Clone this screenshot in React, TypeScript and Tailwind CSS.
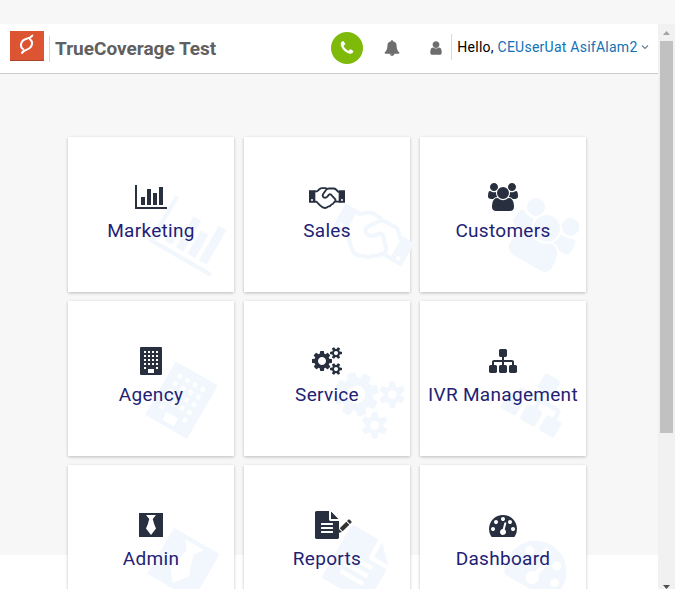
import type { ReactNode } from "react";

type Glyph = { width: number; art: ReactNode };

const dot = (x: number, y: number) => `M${x} ${y}h128v128h-128z`;
const windows = [256, 512, 768, 1024]
  .flatMap((y) => [256, 512, 768, 1024].map((x) => dot(x, y)))
  .concat([dot(256, 1280), dot(1024, 1280)])
  .join("");

const GLYPHS: Record<string, Glyph> = {
  chart: {
    width: 2048,
    art: <path d="M640 896v512h-256v-512h256zM1024 384v1024h-256v-1024h256zM2048 1536v128h-2048v-1536h128v1408h1920zM1408 640v768h-256v-768h256zM1792 256v1152h-256v-1152h256z" />,
  },
  handshake: {
    width: 2304,
    art: (
      <g transform="scale(21.333)">
        <path fillRule="evenodd" d="M0 22h19v37h-19zM6 51a3 3 0 1 0 6 0a3 3 0 1 0 -6 0zM89 22h19v37h-19zM96 51a3 3 0 1 0 6 0a3 3 0 1 0 -6 0z" />
        <path fill="none" stroke="currentColor" strokeWidth="5.500" strokeLinejoin="round" strokeLinecap="round" d="M18 25h6l8-7q3-2.500 7-2.500h12M18 56h4l12 12q7 7 14 7q5 0 9-4q7 0 10-6q6-1 8-7q6-2 4-9l-13-14q-3-3-6 0l-5 6q-5 5-11 2q-5-4-2-9l9-13q3-4.500 9-4.500h14q4 0 7 3l7 7h4M79 56h11" />
      </g>
    ),
  },
  users: {
    width: 1920,
    art: <path d="M593 896q-162 5-265 128h-134q-82 0-138-40.5t-56-118.5q0-353 124-353 6 0 43.5 21t97.5 42.5 119 21.5q67 0 133-23-5 37-5 66 0 139 81 256zm1071 637q0 120-73 189.5t-194 69.5h-874q-121 0-194-69.5t-73-189.5q0-53 3.5-103.5t14-109 26.5-108.5 43-97.5 62-81 85.5-53.5 111.5-20q10 0 43 21.5t73 48 107 48 135 21.5 135-21.5 107-48 73-48 43-21.5q61 0 111.5 20t85.5 53.5 62 81 43 97.5 26.5 108.5 14 109 3.5 103.5zm-1024-1277q0 106-75 181t-181 75-181-75-75-181 75-181 181-75 181 75 75 181zm704 384q0 159-112.5 271.5t-271.5 112.5-271.5-112.5-112.5-271.5 112.5-271.5 271.5-112.5 271.5 112.5 112.5 271.5zm576 225q0 78-56 118.5t-138 40.5h-134q-103-123-265-128 81-117 81-256 0-29-5-66 66 23 133 23 59 0 119-21.5t97.5-42.5 43.5-21q124 0 124 353zm-128-609q0 106-75 181t-181 75-181-75-75-181 75-181 181-75 181 75 75 181z" />,
  },
  building: {
    width: 1408,
    art: <path fillRule="evenodd" d={"M64 0h1280q64 0 64 64v1664q0 64-64 64h-1280q-64 0-64-64v-1664q0-64 64-64zM544 1408h320q32 0 32 32v192q0 32-32 32h-320q-32 0-32-32v-192q0-32 32-32z" + windows} />,
  },
  cogs: {
    width: 1920,
    art: <path d="M896 896q0-106-75-181t-181-75-181 75-75 181 75 181 181 75 181-75 75-181zm768 512q0-52-38-90t-90-38-90 38-38 90q0 53 37.500 90.500t90.500 37.500 90.500-37.500 37.500-90.500zm0-1024q0-52-38-90t-90-38-90 38-38 90q0 53 37.500 90.500t90.500 37.500 90.500-37.500 37.500-90.500zm-384 421v185q0 10-7 19.500t-16 10.500l-155 24q-11 35-32 76 34 48 90 115 7 11 7 20 0 12-7 19-23 30-82.500 89.500t-78.500 59.500q-11 0-21-7l-115-90q-37 19-77 31-11 108-23 155-7 24-30 24h-186q-11 0-20-7.500t-10-17.500l-23-153q-34-10-75-31l-118 89q-7 7-20 7-11 0-21-8-144-133-144-160 0-9 7-19 10-14 41-53t47-61q-23-44-35-82l-152-24q-10-1-17-9.500t-7-19.500v-185q0-10 7-19.500t16-10.500l155-24q11-35 32-76-34-48-90-115-7-11-7-20 0-12 7-20 22-30 82-89t79-59q11 0 21 7l115 90q34-18 77-32 11-108 23-154 7-24 30-24h186q11 0 20 7.500t10 17.500l23 153q34 10 75 31l118-89q8-7 20-7 11 0 21 8 144 133 144 160 0 8-7 19-12 16-42 54t-45 60q23 48 34 82l152 23q10 2 17 10.500t7 19.500zm640 533v140q0 16-149 31-12 27-30 52 51 113 51 138 0 4-4 7-122 71-124 71-8 0-46-47t-52-68q-20 2-30 2t-30-2q-14 21-52 68t-46 47q-2 0-124-71-4-3-4-7 0-25 51-138-18-25-30-52-149-15-149-31v-140q0-16 149-31 13-29 30-52-51-113-51-138 0-4 4-7 4-2 35-20t59-34 30-16q8 0 46 46.500t52 67.500q20-2 30-2t30 2q51-71 92-112l6-2q4 0 124 70 4 3 4 7 0 25-51 138 17 23 30 52 149 15 149 31zm0-1024v140q0 16-149 31-12 27-30 52 51 113 51 138 0 4-4 7-122 71-124 71-8 0-46-47t-52-68q-20 2-30 2t-30-2q-14 21-52 68t-46 47q-2 0-124-71-4-3-4-7 0-25 51-138-18-25-30-52-149-15-149-31v-140q0-16 149-31 13-29 30-52-51-113-51-138 0-4 4-7 4-2 35-20t59-34 30-16q8 0 46 46.500t52 67.500q20-2 30-2t30 2q51-71 92-112l6-2q4 0 124 70 4 3 4 7 0 25-51 138 17 23 30 52 149 15 149 31z" />,
  },
  sitemap: {
    width: 1792,
    art: <path d="M1792 1248v320q0 40-28 68t-68 28h-320q-40 0-68-28t-28-68v-320q0-40 28-68t68-28h96v-192h-512v192h96q40 0 68 28t28 68v320q0 40-28 68t-68 28h-320q-40 0-68-28t-28-68v-320q0-40 28-68t68-28h96v-192h-512v192h96q40 0 68 28t28 68v320q0 40-28 68t-68 28h-320q-40 0-68-28t-28-68v-320q0-40 28-68t68-28h96v-192q0-52 38-90t90-38h512v-192h-96q-40 0-68-28t-28-68v-320q0-40 28-68t68-28h320q40 0 68 28t28 68v320q0 40-28 68t-68 28h-96v192h512q52 0 90 38t38 90v192h96q40 0 68 28t28 68z" />,
  },
  tie: {
    width: 1536,
    art: <path fillRule="evenodd" d="M0 128h1536v1536h-1536zM448 256h640l-208 256q70 330 208 610l-320 410l-320-410q138-280 208-610z" />,
  },
  file: {
    width: 1536,
    art: <path fillRule="evenodd" d="M1468 476q14 14 28 36h-472v-472q22 14 36 28zM992 640h544v1056q0 40-28 68t-68 28h-1344q-40 0-68-28t-28-68v-1600q0-40 28-68t68-28h800v544q0 40 28 68t68 28zM416 768h704q32 0 32 32v64q0 32-32 32h-704q-32 0-32-32v-64q0-32 32-32zM416 1024h704q32 0 32 32v64q0 32-32 32h-704q-32 0-32-32v-64q0-32 32-32zM416 1280h704q32 0 32 32v64q0 32-32 32h-704q-32 0-32-32v-64q0-32 32-32z" />,
  },
  gauge: {
    width: 1792,
    art: <path d="M384 1152q0-53-37.500-90.500t-90.500-37.500-90.500 37.500-37.500 90.500 37.500 90.500 90.500 37.500 90.500-37.500 37.500-90.500zm192-448q0-53-37.500-90.500t-90.500-37.500-90.500 37.500-37.500 90.500 37.500 90.500 90.500 37.500 90.500-37.500 37.500-90.500zm428 481l101-382q6-26-7.500-48.500t-38.500-29.500-48 6.500-30 39.500l-101 382q-60 5-107 43.500t-63 98.500q-20 77 20 146t117 89 146-20 89-117q16-60-6-117t-72-91zm660-33q0-53-37.500-90.500t-90.500-37.500-90.500 37.500-37.500 90.500 37.500 90.500 90.500 37.500 90.500-37.500 37.500-90.500zm-640-640q0-53-37.500-90.500t-90.500-37.500-90.500 37.500-37.500 90.500 37.500 90.500 90.500 37.500 90.500-37.500 37.500-90.500zm448 192q0-53-37.500-90.500t-90.500-37.500-90.500 37.500-37.500 90.500 37.500 90.500 90.500 37.500 90.500-37.500 37.500-90.500zm320 448q0 261-141 483-19 29-54 29h-1402q-35 0-54-29-141-221-141-483 0-182 71-348t191-286 286-191 348-71 348 71 286 191 191 286 71 348z" />,
  },
  bell: {
    width: 1792,
    art: <path d="M912 1696q0-16-16-16-59 0-101.500-42.500t-42.500-101.500q0-16-16-16t-16 16q0 73 51.500 124.500t124.500 51.500q16 0 16-16zm816-288q0 52-38 90t-90 38h-448q0 106-75 181t-181 75-181-75-75-181h-448q-52 0-90-38t-38-90q50-42 91-88t85-119.500 74.500-158.500 50-206 19.500-260q0-152 117-282.500t307-158.500q-8-19-8-39 0-40 28-68t68-28 68 28 28 68q0 20-8 39 190 28 307 158.500t117 282.500q0 139 19.500 260t50 206 74.500 158.500 85 119.500 91 88z" />,
  },
  user: {
    width: 1792,
    art: <path d="M1536 1399q0 109-62.500 187t-150.500 78h-854q-88 0-150.500-78t-62.500-187q0-85 8.500-160.500t31.500-152 58.500-131 94-89 134.500-34.500q131 128 313 128t313-128q76 0 134.500 34.500t94 89 58.500 131 31.500 152 8.500 160.500zm-256-887q0 159-112.500 271.500t-271.500 112.500-271.500-112.500-112.500-271.500 112.500-271.500 271.500-112.500 271.500 112.500 112.500 271.500z" />,
  },
  phone: {
    width: 1792,
    art: <path d="M1600 1240q0 27-10 70.500t-21 68.500q-21 50-122 106-94 51-186 51-27 0-53-3.500t-57.500-12.500-47-14.500-55.500-20.500-49-18q-98-35-175-83-127-79-264-216t-216-264q-48-77-83-175-3-9-18-49t-20.500-55.500-14.500-47-12.500-57.500-3.500-53q0-92 51-186 56-101 106-122 25-11 68.500-21t70.500-10q14 0 21 3 18 6 53 76 11 19 30 54t35 63.500 31 53.500q3 4 17.500 25t21.500 35.500 7 28.500q0 20-28.500 50t-62 55-62 53-28.500 46q0 9 5 22.500t8.500 20.500 14 24 11.500 19q76 137 174 235t235 174q2 1 19 11.500t24 14 20.500 8.500 22.500 5q18 0 46-28.500t53-62 55-62 50-28.500q14 0 28.500 7t35.500 21.500 25 17.500q25 15 53.500 31t63.500 35 54 30q70 35 76 53 3 7 3 21z" />,
  },
};

function Icon({ name, className }: { name: string; className: string }) {
  const glyph = GLYPHS[name];
  return (
    <svg viewBox={`0 0 ${glyph.width} 1792`} fill="currentColor" className={`w-auto shrink-0 ${className}`}>
      {glyph.art}
    </svg>
  );
}

const TILES = [
  ["Marketing", "chart"],
  ["Sales", "handshake"],
  ["Customers", "users"],
  ["Agency", "building"],
  ["Service", "cogs"],
  ["IVR Management", "sitemap"],
  ["Admin", "tie"],
  ["Reports", "file"],
  ["Dashboard", "gauge"],
];

function Tile({ label, icon }: { label: string; icon: string }) {
  return (
    <a className="relative flex h-[155px] flex-col items-center bg-white pt-[46px] shadow-[0_1px_3px_rgba(0,0,0,0.24)]">
      <Icon name={icon} className="absolute top-[67.500px] left-[89px] h-[62px] rotate-[30deg] text-[#f1f7fc]" />
      <span className="relative flex">
        <Icon name={icon} className="h-7 text-[#28303f]" />
        {icon === "file" && (
          <svg viewBox="0 0 14 14" className="absolute top-2 left-[23px] size-3.5 text-[#333]" fill="currentColor">
            <path d="M0 14l1-4 3 3zM1.700 9.300l6.600-6.600 3 3-6.600 6.600zM9 2l1.300-1.300q.7-.7 1.400 0l1.600 1.600q.7.7 0 1.400l-1.300 1.300z" />
          </svg>
        )}
      </span>
      <span className="relative mt-[5.500px] text-[19px] leading-7 tracking-[0.3px] whitespace-nowrap text-[#1f2274]">{label}</span>
    </a>
  );
}

function Header() {
  return (
    <header className="flex h-[50px] shrink-0 items-center border-b border-[#ccc] bg-white pl-2.5">
      <div className="-mt-[5px] h-[30px] w-[34px] border-b border-[#a8432b] bg-[#dc5432]">
        <svg viewBox="30 48 102 87" className="h-[29px] w-[34px]" fill="none" stroke="#fff" strokeLinecap="round">
          <path strokeWidth="6" d="M97 62Q92 69 80 71Q65 75 63 88Q62 98 69 102M90 73Q98 78 96 88Q93 100 80 104Q69 107 66 114" />
        </svg>
      </div>
      <div className="ml-[5px] h-[26px] w-px bg-[#d8d8d8]" />
      <h1 className="ml-[5px] text-[19px] leading-6 font-bold text-[#606060]">TrueCoverage Test</h1>
      <div className="-mt-px ml-auto flex size-8 items-center justify-center rounded-full bg-[#7fba0b] text-white">
        <Icon name="phone" className="h-4" />
      </div>
      <Icon name="bell" className="-mt-0.5 ml-[21px] h-4 text-[#6e6e6e]" />
      <Icon name="user" className="-mt-0.5 ml-7 h-4 text-[#6e6e6e]" />
      <div className="-mt-[3px] ml-[7px] h-[26px] w-px bg-[#cfdde6]" />
      <p className="-mt-[3px] ml-[5px] flex items-center text-sm leading-5 tracking-[0.25px] whitespace-pre text-black">
        Hello, <span className="text-[#1272b5]">CEUserUat AsifAlam2</span>
        <svg viewBox="0 0 8 8" className="mr-[9.500px] ml-[3px] size-2" fill="none" stroke="#6b8294" strokeWidth="1.200">
          <path d="M1 2.500l3 3 3-3" />
        </svg>
      </p>
    </header>
  );
}

function Scrollbar() {
  return (
    <div className="flex w-[17px] flex-col items-center justify-between bg-[#f1f1f1]">
      <div className="flex flex-col items-center">
        <svg viewBox="0 0 17 17" className="size-[17px]"><path fill="#a3a3a3" d="M5 11l3.500-4 3.500 4z" /></svg>
        <div className="h-[392px] w-[13px] bg-[#c1c1c1]" />
      </div>
      <svg viewBox="0 0 17 6" className="h-1.5 w-[17px]"><path fill="#505050" d="M5 2h7l-3.500 4z" /></svg>
    </div>
  );
}

export default function App() {
  return (
    <div className="flex h-[589px] w-[675px] flex-col overflow-hidden bg-[#f7f7f7] pt-6 font-[Roboto,sans-serif]">
      <div className="flex min-h-0 flex-1">
        <div className="flex w-[658px] flex-col overflow-hidden bg-[linear-gradient(#f7f7f7_531px,#fff_531px)]">
          <Header />
          <main className="mt-[63px] ml-[68px] grid grid-cols-[166px_166px_166px] gap-x-2.5 gap-y-[9px]">
            {TILES.map(([label, icon]) => (
              <Tile key={label} label={label} icon={icon} />
            ))}
          </main>
        </div>
        <Scrollbar />
      </div>
    </div>
  );
}
